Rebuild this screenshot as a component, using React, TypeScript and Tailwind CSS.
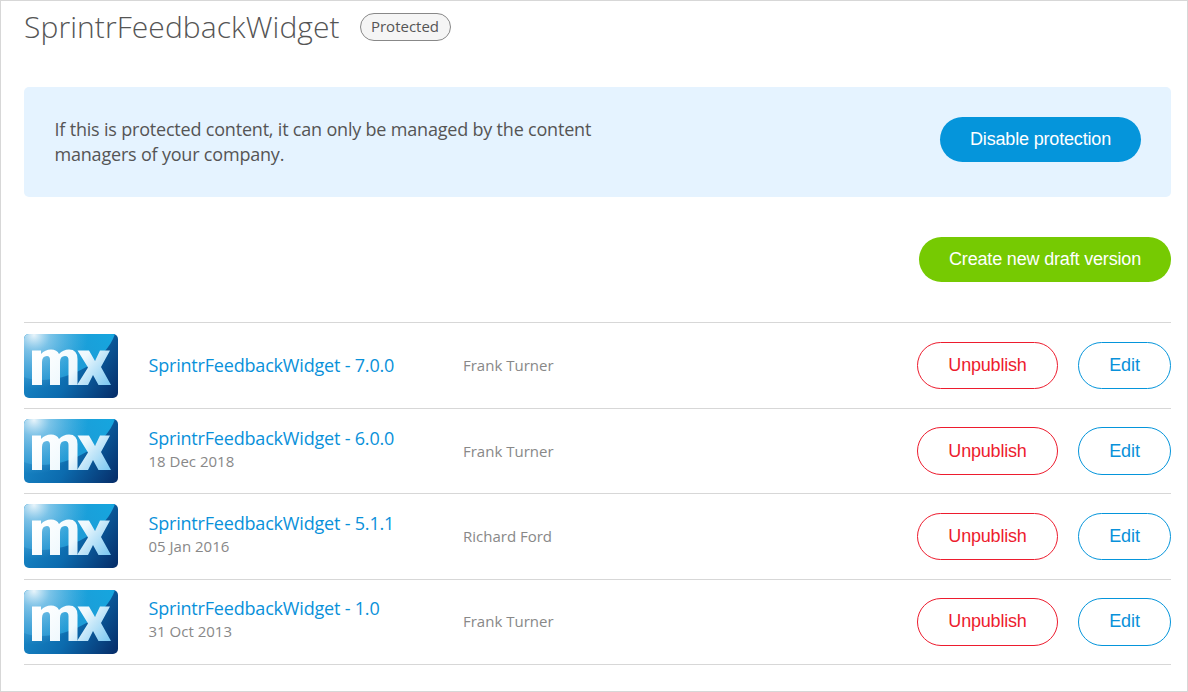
type Row = { v: string; date?: string; who: string; h: string; btn: string; info: string; logo: string; name: string };

const rows: Row[] = [
  { v: "7.0.0", who: "Frank Turner", h: "h-[86px]", btn: "mt-[19px] h-[47px] pb-px", info: "pt-[30px]", logo: "mt-[11px]", name: "pt-[31px]" },
  { v: "6.0.0", date: "18 Dec 2018", who: "Frank Turner", h: "h-[85px]", btn: "mt-[18px] h-[48px]", info: "pt-[17px]", logo: "mt-[10px]", name: "pt-[31px]" },
  { v: "5.1.1", date: "05 Jan 2016", who: "Richard Ford", h: "h-[86px]", btn: "mt-[19px] h-[47px] pb-px", info: "pt-[17px]", logo: "mt-[10px]", name: "pt-[31px]" },
  { v: "1.0", date: "31 Oct 2013", who: "Frank Turner", h: "h-[85px]", btn: "mt-[18px] h-[48px] pb-px", info: "pt-[16px]", logo: "mt-[10px]", name: "pt-[30px]" },
];

function Logo({ id }: { id: string }) {
  return (
    <svg width="94" height="64" viewBox="0 0 94 64" className="block rounded-[5px]" aria-hidden="true">
      <defs>
        <linearGradient id={id + "base"} x1="15" y1="20" x2="88" y2="66" gradientUnits="userSpaceOnUse">
          <stop offset="0" stopColor="#1784c4" />
          <stop offset="0.45" stopColor="#0c6bae" />
          <stop offset="1" stopColor="#06306c" />
        </linearGradient>
        <linearGradient id={id + "arc"} x1="0" y1="0.5" x2="1" y2="0.2">
          <stop offset="0" stopColor="#2492cf" />
          <stop offset="1" stopColor="#16a5de" />
        </linearGradient>
        <radialGradient id={id + "glow"} cx="10" cy="1" r="54" gradientUnits="userSpaceOnUse">
          <stop offset="0" stopColor="#fff" stopOpacity="0.9" />
          <stop offset="0.3" stopColor="#c5e6f8" stopOpacity="0.55" />
          <stop offset="1" stopColor="#8fd0f0" stopOpacity="0" />
        </radialGradient>
        <linearGradient id={id + "mark"} x1="25" y1="10" x2="80" y2="56" gradientUnits="userSpaceOnUse">
          <stop offset="0" stopColor="#fff" />
          <stop offset="0.5" stopColor="#eef8fd" />
          <stop offset="1" stopColor="#7fcaf2" />
        </linearGradient>
      </defs>
      <rect width="94" height="64" fill={`url(#${id}base)`} />
      <path d="M0 0H91C82 25 51 46 16 46Q7 46 0 43Z" fill={`url(#${id}arc)`} />
      <rect width="94" height="64" fill={`url(#${id}glow)`} />
      <g fill={`url(#${id}mark)`}>
        <path d="M8 16.500H17V20Q21 15.500 27 15.500Q33 15.500 35 20Q39 15.500 45 15.500Q53.500 15.500 53.500 25V51H44.500V26Q44.500 22 41 22Q36 22 36 28V51H26V26Q26 22 23 22Q18 22 18 28V51H8Z" />
        <path d="M53.500 16.500H65L71 27L76 16.500H86L77 33L87 51H74.500L69 41L64 51H53L64 33.500Z" />
      </g>
    </svg>
  );
}

export default function App() {
  return (
    <div className="h-[692px] w-[1188px] overflow-hidden border border-[#d7d7d7] bg-white pl-[23px] pr-4 font-['Open_Sans',sans-serif] text-[#555]">
      <header className="flex h-[86px] items-start">
        <h1 className="w-[336px] whitespace-nowrap pt-[6px] text-[30px] font-light leading-[40px] tracking-[0.08px]">SprintrFeedbackWidget</h1>
        <span className="mt-3 flex h-7 w-[91px] items-center justify-center rounded-full border border-[#888] bg-[#f5f5f5] pb-[2px] pr-px text-[15px]">Protected</span>
      </header>
      <section className="flex h-[110px] items-start justify-between rounded-[5px] bg-[#e5f3ff] pl-[30.500px] pr-[30px] pt-[30px]">
        <p className="text-[18px] leading-[25px] tracking-[-0.195px]">If this is protected content, it can only be managed by the content<br />managers of your company.</p>
        <button className="h-[45px] w-[201px] rounded-full bg-[#0595db] font-['Liberation_Sans',sans-serif] text-[18px] tracking-[-0.17px] text-white">Disable protection</button>
      </section>
      <div className="flex h-[125px] justify-end pt-10">
        <button className="h-[45px] w-[252px] rounded-full bg-[#76ca02] font-['Liberation_Sans',sans-serif] text-[18px] tracking-[-0.17px] text-white">Create new draft version</button>
      </div>
      <ul className="border-t border-[#d7d7d7]">
        {rows.map((r, i) => (
          <li key={r.v} className={"flex items-start border-b border-[#d7d7d7] " + r.h}>
            <div className={"shrink-0 " + r.logo}>
              <Logo id={"logo" + i} />
            </div>
            <div className={"ml-[30.500px] w-[314.500px] " + r.info}>
              <a className="block text-[18px] leading-[24px] tracking-[-0.19px] text-[#0991da]">SprintrFeedbackWidget - {r.v}</a>
              {r.date && <div className="text-[15px] leading-[22px] text-[#888]">{r.date}</div>}
            </div>
            <div className={"flex-1 text-[15px] leading-[22px] text-[#888] " + r.name}>{r.who}</div>
            <button className={"w-[141px] rounded-full border border-[#ed1c2e] font-['Liberation_Sans',sans-serif] text-[18px] tracking-[-0.2px] text-[#ed1c2e] " + r.btn}>Unpublish</button>
            <button className={"ml-5 w-[93px] rounded-full border border-[#0595db] font-['Liberation_Sans',sans-serif] text-[18px] tracking-[-0.1px] text-[#0991da] " + r.btn}>Edit</button>
          </li>
        ))}
      </ul>
    </div>
  );
}
